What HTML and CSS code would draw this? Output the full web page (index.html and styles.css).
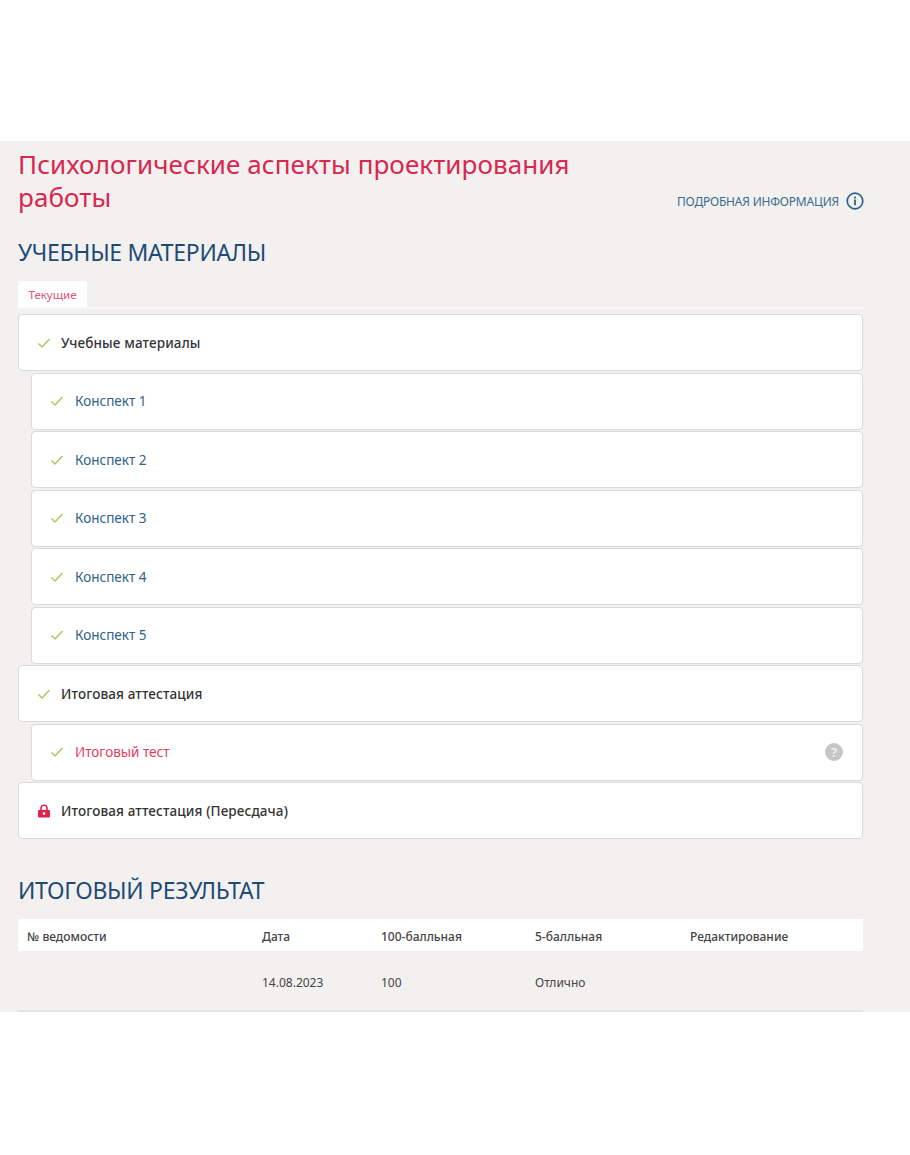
FILE: index.html
```html
<!DOCTYPE html>
<html lang="en">
<head>
    <meta charset="UTF-8">
    <meta name="viewport" content="width=device-width, initial-scale=1.0">
    <title>Психологические аспекты проектирования работы</title>
    <link rel="stylesheet" href="styles.css">
</head>
<body>
    <div class="page">
        <div class="course-header">
            <h1>Психологические аспекты проектирования работы</h1>
            <a class="more-info">
                <span>Подробная информация</span>
                <svg class="info-icon" viewBox="0 0 18 18">
                    <circle cx="9" cy="9" r="7.8" fill="none" stroke="#2b6288" stroke-width="1.7"/>
                    <rect x="8.1" y="7.6" width="1.8" height="5.6" fill="#2b6288"/>
                    <rect x="8.1" y="4.6" width="1.8" height="1.9" fill="#2b6288"/>
                </svg>
            </a>
        </div>

        <h2 class="section-title">Учебные материалы</h2>

        <div class="tabs">
            <div class="tab">Текущие</div>
        </div>

        <div class="materials">
            <div class="row">
                <svg class="check" viewBox="0 0 14 12"><path d="M1.5 6.5 5 10l7.5-8"/></svg>
                <span class="row-title">Учебные материалы</span>
            </div>
            <div class="row sub">
                <svg class="check" viewBox="0 0 14 12"><path d="M1.5 6.5 5 10l7.5-8"/></svg>
                <span class="row-link">Конспект 1</span>
            </div>
            <div class="row sub">
                <svg class="check" viewBox="0 0 14 12"><path d="M1.5 6.5 5 10l7.5-8"/></svg>
                <span class="row-link">Конспект 2</span>
            </div>
            <div class="row sub">
                <svg class="check" viewBox="0 0 14 12"><path d="M1.5 6.5 5 10l7.5-8"/></svg>
                <span class="row-link">Конспект 3</span>
            </div>
            <div class="row sub">
                <svg class="check" viewBox="0 0 14 12"><path d="M1.5 6.5 5 10l7.5-8"/></svg>
                <span class="row-link">Конспект 4</span>
            </div>
            <div class="row sub">
                <svg class="check" viewBox="0 0 14 12"><path d="M1.5 6.5 5 10l7.5-8"/></svg>
                <span class="row-link">Конспект 5</span>
            </div>
            <div class="row">
                <svg class="check" viewBox="0 0 14 12"><path d="M1.5 6.5 5 10l7.5-8"/></svg>
                <span class="row-title">Итоговая аттестация</span>
            </div>
            <div class="row sub">
                <svg class="check" viewBox="0 0 14 12"><path d="M1.5 6.5 5 10l7.5-8"/></svg>
                <span class="row-link red">Итоговый тест</span>
                <span class="help">?</span>
            </div>
            <div class="row">
                <svg class="lock" viewBox="0 0 14 14">
                    <path d="M4 6.5V4.2a3 3 0 0 1 6 0v2.3" fill="none" stroke="#e0234e" stroke-width="1.6"/>
                    <rect x="1" y="6" width="12" height="7.5" rx="1" fill="#e0234e"/>
                    <circle cx="7" cy="9.6" r="1.3" fill="#fff"/>
                </svg>
                <span class="row-title">Итоговая аттестация (Пересдача)</span>
            </div>
        </div>

        <h2 class="section-title result-title">Итоговый результат</h2>

        <table class="result-table">
            <thead>
                <tr>
                    <th class="col-number">№ ведомости</th>
                    <th class="col-date">Дата</th>
                    <th class="col-100">100-балльная</th>
                    <th class="col-5">5-балльная</th>
                    <th>Редактирование</th>
                </tr>
            </thead>
            <tbody>
                <tr>
                    <td></td>
                    <td>14.08.2023</td>
                    <td>100</td>
                    <td>Отлично</td>
                    <td></td>
                </tr>
            </tbody>
        </table>
    </div>
</body>
</html>
```

FILE: styles.css
```css
* {
    margin: 0;
    padding: 0;
    box-sizing: border-box;
}

body {
    font-family: 'Noto Sans', 'Open Sans', sans-serif;
    background: #fff;
    height: 1155px;
    padding-top: 141px;
}

.page {
    background: #f2f1f0;
    height: 871px;
    padding: 7px 47px 0 18px;
    overflow: hidden;
}

.course-header {
    display: flex;
    justify-content: space-between;
    align-items: flex-end;
}

.course-header h1 {
    width: 600px;
    font-size: 26px;
    font-weight: 400;
    line-height: 33px;
    letter-spacing: 0.08px;
    color: #d9274f;
}

.more-info {
    display: flex;
    align-items: center;
    gap: 7px;
    margin-right: -1px;
    margin-bottom: 4px;
    font-size: 12px;
    letter-spacing: -0.2px;
    text-transform: uppercase;
    color: #3c6a8c;
}

.info-icon {
    width: 18px;
    height: 18px;
}

.section-title {
    margin-top: 23px;
    font-size: 23px;
    font-weight: 400;
    line-height: 30px;
    letter-spacing: -0.3px;
    text-transform: uppercase;
    color: #1f4a75;
}

.tabs {
    margin-top: 14px;
    border-bottom: 2px solid #f8f8f8;
    height: 28px;
}

.tab {
    width: 69px;
    height: 26px;
    background: #fff;
    border-radius: 2px 2px 0 0;
    font-size: 11.5px;
    line-height: 28px;
    text-align: center;
    color: #de5472;
}

.materials {
    margin-top: 5px;
    display: flex;
    flex-direction: column;
    gap: 1.5px;
}

.row {
    display: flex;
    align-items: center;
    height: 57px;
    padding-left: 18px;
    background: #fff;
    border: 1px solid #d9d9d9;
    border-radius: 4px;
}

.row.sub {
    margin-left: 13px;
    padding-right: 19px;
}

.check {
    width: 14px;
    height: 12px;
    margin-right: 11px;
    fill: none;
    stroke: #a9c95f;
    stroke-width: 1.5;
}

.lock {
    width: 14px;
    height: 14px;
    margin-right: 11px;
}

.row-title {
    margin-left: -1px;
    font-size: 13.5px;
    font-weight: 500;
    letter-spacing: 0.12px;
    color: #333;
}

.row-link {
    font-size: 13.5px;
    color: #2d6288;
}

.row-link.red {
    color: #e0405f;
}

.help {
    width: 18px;
    height: 18px;
    margin-left: auto;
    border-radius: 50%;
    background: #c6c6c6;
    font-size: 13px;
    font-weight: 700;
    line-height: 18px;
    text-align: center;
    color: #eee;
}

.result-title {
    margin-top: 36px;
}

.result-table {
    width: 845px;
    margin-top: 14px;
    table-layout: fixed;
    border-collapse: collapse;
    font-size: 12px;
    color: #444;
}

.result-table th {
    height: 32px;
    padding: 2px 0 0 9px;
    background: #fff;
    font-weight: 500;
    text-align: left;
    color: #444;
}

.result-table td {
    height: 60px;
    padding: 4px 0 0 9px;
    border-bottom: 2px solid #e4e4e4;
}

.col-number {
    width: 235px;
}

.col-date {
    width: 119px;
}

.col-100 {
    width: 154px;
}

.col-5 {
    width: 155px;
}
```
